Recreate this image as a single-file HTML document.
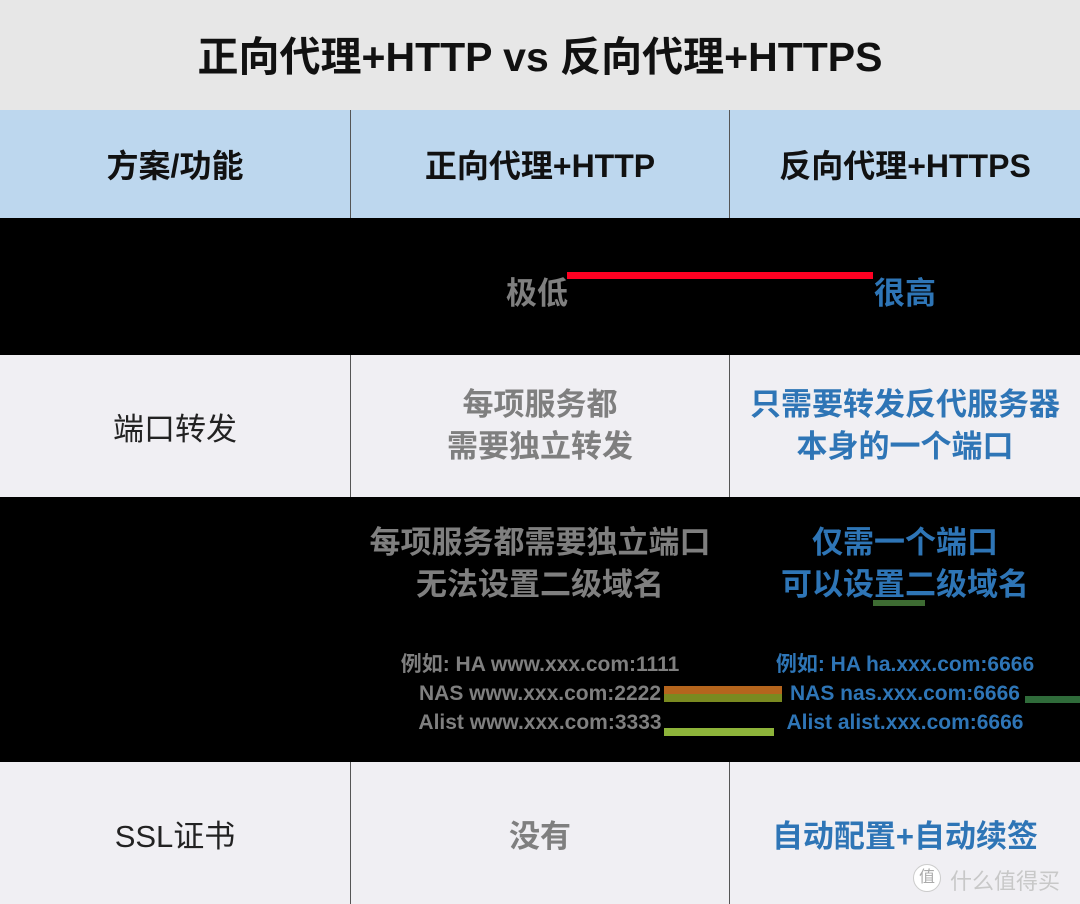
<!DOCTYPE html>
<html><head><meta charset="utf-8"><style>
*{margin:0;padding:0;box-sizing:border-box}
body{width:1080px;height:904px;overflow:hidden;background:#000;font-family:"Liberation Sans","Noto Sans CJK SC",sans-serif;position:relative}
.a{position:absolute}
.c{position:absolute;display:flex;flex-direction:column;align-items:center;justify-content:center;text-align:center;white-space:nowrap}
.g{color:#7f7f7f;font-weight:bold}
.b{color:#2e75b6;font-weight:bold}
</style></head><body>
<div class="a" style="left:0;top:0;width:1080px;height:110px;background:#e7e7e7"></div>
<div class="c" style="left:0;top:0;width:1080px;height:106px;font-size:41px;font-weight:bold;color:#111">正向代理+HTTP vs 反向代理+HTTPS</div>
<div class="a" style="left:0;top:110px;width:1080px;height:108px;background:#bdd7ee"></div>
<div class="c" style="left:0;top:110px;width:350px;height:108px;font-size:32px;font-weight:bold;color:#111">方案/功能</div>
<div class="c" style="left:351px;top:110px;width:378px;height:108px;font-size:32px;font-weight:bold;color:#111">正向代理+HTTP</div>
<div class="c" style="left:730px;top:110px;width:350px;height:108px;font-size:32px;font-weight:bold;color:#111">反向代理+HTTPS</div>
<div class="a" style="left:0;top:355px;width:1080px;height:142px;background:#f0eff3"></div>
<div class="a" style="left:0;top:762px;width:1080px;height:142px;background:#f0eff3"></div>
<div class="a" style="left:350px;top:110px;width:1px;height:108px;background:#555"></div>
<div class="a" style="left:729px;top:110px;width:1px;height:108px;background:#555"></div>
<div class="a" style="left:350px;top:355px;width:1px;height:142px;background:#555"></div>
<div class="a" style="left:729px;top:355px;width:1px;height:142px;background:#555"></div>
<div class="a" style="left:350px;top:762px;width:1px;height:142px;background:#555"></div>
<div class="a" style="left:729px;top:762px;width:1px;height:142px;background:#555"></div>

<div class="a g" style="left:506px;top:268px;font-size:31px">极低</div>
<div class="a" style="left:567px;top:272px;width:306px;height:7px;background:#ff0022"></div>
<div class="a b" style="left:874px;top:268px;font-size:31px">很高</div>

<div class="c" style="left:0;top:355px;width:350px;height:142px;font-size:31px;color:#222">端口转发</div>
<div class="c g" style="left:351px;top:355px;width:378px;height:142px;font-size:31px;line-height:42px">每项服务都<br>需要独立转发</div>
<div class="c b" style="left:730px;top:355px;width:350px;height:142px;font-size:31px;line-height:42px">只需要转发反代服务器<br>本身的一个端口</div>

<div class="c g" style="left:351px;top:522px;width:378px;font-size:31px;line-height:42px">每项服务都需要独立端口<br>无法设置二级域名</div>
<div class="c b" style="left:730px;top:522px;width:350px;font-size:31px;line-height:42px">仅需一个端口<br>可以设置二级域名</div>
<div class="a" style="left:873px;top:600px;width:52px;height:6px;background:#3d6b32"></div>
<div class="c g" style="left:351px;top:650px;width:378px;font-size:21px;line-height:29px">例如: HA www.xxx.com:1111<br>NAS www.xxx.com:2222<br>Alist www.xxx.com:3333</div>
<div class="c b" style="left:730px;top:650px;width:350px;font-size:21px;line-height:29px">例如: HA ha.xxx.com:6666<br>NAS nas.xxx.com:6666<br>Alist alist.xxx.com:6666</div>
<div class="a" style="left:664px;top:686px;width:118px;height:8px;background:#b5651d"></div>
<div class="a" style="left:664px;top:694px;width:118px;height:8px;background:#7a8a20"></div>
<div class="a" style="left:664px;top:728px;width:110px;height:8px;background:#8db33a"></div>
<div class="a" style="left:1025px;top:696px;width:55px;height:7px;background:#2f6b3a"></div>

<div class="c" style="left:0;top:762px;width:350px;height:142px;font-size:31px;color:#222">SSL证书</div>
<div class="c g" style="left:351px;top:762px;width:378px;height:142px;font-size:31px">没有</div>
<div class="c b" style="left:730px;top:762px;width:350px;height:142px;font-size:31px">自动配置+自动续签</div>
<div class="a" style="left:913px;top:864px;width:28px;height:28px;border-radius:50%;background:#fff;border:1px solid #ccc;font-size:16px;color:#aaa;text-align:center;line-height:26px">值</div>
<div class="a" style="left:950px;top:864px;font-size:22px;color:#c8c8c8">什么值得买</div>
</body></html>
